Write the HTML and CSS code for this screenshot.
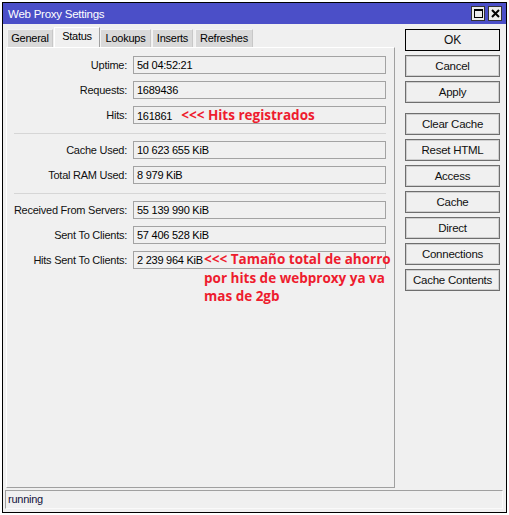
FILE: index.html
```html
<!DOCTYPE html>
<html>
<head>
<meta charset="utf-8">
<link rel="stylesheet" href="styles.css">
</head>
<body>
<div class="window">
  <div class="titlebar">
    <span class="title">Web Proxy Settings</span>
    <div class="tb-btns">
      <span class="tb-btn"><svg width="11" height="11" viewBox="0 0 11 11"><rect x="1.5" y="1.5" width="8" height="8" fill="none" stroke="#000" stroke-width="1"/><rect x="1" y="1" width="9" height="2" fill="#000"/></svg></span>
      <span class="tb-btn"><svg width="11" height="11" viewBox="0 0 11 11"><path d="M2 2 L9 9 M9 2 L2 9" stroke="#000" stroke-width="2"/></svg></span>
    </div>
  </div>
  <div class="main">
    <div class="left">
      <div class="tabs">
        <div class="tab t-general">General</div>
        <div class="tab active t-status">Status</div>
        <div class="tab t-lookups">Lookups</div>
        <div class="tab t-inserts">Inserts</div>
        <div class="tab t-refreshes">Refreshes</div>
      </div>
      <div class="panel">
        <div class="row"><span class="label">Uptime:</span><div class="field">5d 04:52:21</div></div>
        <div class="row"><span class="label">Requests:</span><div class="field">1689436</div></div>
        <div class="row"><span class="label">Hits:</span><div class="field">161861<span class="note">&lt;&lt;&lt; Hits registrados</span></div></div>
        <div class="sep"></div>
        <div class="row"><span class="label">Cache Used:</span><div class="field">10 623 655 KiB</div></div>
        <div class="row"><span class="label">Total RAM Used:</span><div class="field">8 979 KiB</div></div>
        <div class="sep"></div>
        <div class="row"><span class="label">Received From Servers:</span><div class="field">55 139 990 KiB</div></div>
        <div class="row"><span class="label">Sent To Clients:</span><div class="field">57 406 528 KiB</div></div>
        <div class="row"><span class="label">Hits Sent To Clients:</span><div class="field">2 239 964 KiB<div class="note-block">&lt;&lt;&lt; Tamaño total de ahorro<br>por hits de webproxy ya va<br>mas de 2gb</div></div></div>
      </div>
    </div>
    <div class="buttons">
      <div class="btn default">OK</div>
      <div class="btn">Cancel</div>
      <div class="btn">Apply</div>
      <div class="btn group">Clear Cache</div>
      <div class="btn">Reset HTML</div>
      <div class="btn">Access</div>
      <div class="btn">Cache</div>
      <div class="btn">Direct</div>
      <div class="btn">Connections</div>
      <div class="btn">Cache Contents</div>
    </div>
  </div>
  <div class="statusbar">running</div>
</div>
</body>
</html>
```
FILE: styles.css
```css
html, body {
  margin: 0;
  padding: 0;
}
body {
  width: 509px;
  height: 515px;
  overflow: hidden;
  background: #ffffff;
  font-family: "Liberation Sans", Arial, sans-serif;
  font-size: 11px;
  letter-spacing: -0.25px;
  color: #000;
}
.window {
  box-sizing: border-box;
  margin: 2px 0 0 2px;
  width: 505px;
  height: 511px;
  border: 1px solid #000;
  background: #f0f0f0;
  display: flex;
  flex-direction: column;
}
.titlebar {
  height: 21px;
  flex: none;
  background: #4b4fc8;
  display: flex;
  align-items: center;
  padding: 0 4px 0 5px;
  color: #fff;
}
.title {
  font-size: 11.5px;
  flex: 1;
  padding-top: 1px;
}
.tb-btns {
  display: flex;
  gap: 3px;
}
.tb-btn {
  box-sizing: border-box;
  width: 14px;
  height: 15px;
  background: #ececec;
  border: 1px solid #333;
  display: flex;
  align-items: center;
  justify-content: center;
}
.tb-btn svg {
  display: block;
}
.main {
  display: flex;
  height: 464px;
  flex: none;
}
.left {
  width: 392px;
  flex: none;
}
.tabs {
  height: 23px;
  display: flex;
  align-items: flex-end;
  padding-left: 4px;
  box-sizing: border-box;
}
.tab {
  box-sizing: border-box;
  height: 18px;
  margin-right: 1px;
  background: #d9d9d9;
  border: 1px solid #f4f4f4;
  border-bottom: none;
  border-right-color: #c8c8c8;
  line-height: 17px;
  text-align: center;
}
.tab.active {
  height: 21px;
  background: #f0f0f0;
  border-color: #ffffff;
  border-right-color: #a0a0a0;
  line-height: 16px;
  position: relative;
  top: 1px;
}
.t-general { width: 46px; margin-right: 1px; }
.t-status { width: 46px; margin-right: 0; }
.t-lookups { width: 51px; margin-right: 1px; }
.t-inserts { width: 41px; margin-right: 2px; }
.t-refreshes { width: 58px; }
.panel {
  position: relative;
  margin-left: 3px;
  width: 389px;
  height: 441px;
  box-sizing: border-box;
  border: 1px solid #a0a0a0;
  border-top-color: #ffffff;
  border-left-color: #ffffff;
  padding-top: 8px;
  display: flex;
  flex-direction: column;
}
.row {
  display: flex;
  align-items: center;
  height: 18px;
  flex: none;
  margin-bottom: 7px;
}
.label {
  width: 120px;
  text-align: right;
  margin-right: 6px;
  white-space: nowrap;
  color: #111;
}
.field {
  position: relative;
  box-sizing: border-box;
  width: 253px;
  height: 18px;
  border: 1px solid #a3a3a3;
  padding-left: 3px;
  line-height: 16px;
  white-space: nowrap;
}
.note {
  color: #ee1c2e;
  font-family: "Open Sans", sans-serif;
  font-weight: bold;
  font-size: 13.5px;
  letter-spacing: 0;
  margin-left: 9px;
}
.note-block {
  position: absolute;
  left: 70px;
  top: -2px;
  color: #ee1c2e;
  font-family: "Open Sans", sans-serif;
  font-weight: bold;
  font-size: 13.5px;
  letter-spacing: 0;
  line-height: 18.5px;
}
.sep {
  flex: none;
  margin: 2px 0 7px 7px;
  width: 372px;
  height: 1px;
  background: #d6d6d6;
}
.buttons {
  margin-left: 10px;
  padding-top: 5px;
  width: 95px;
  display: flex;
  flex-direction: column;
}
.btn {
  box-sizing: border-box;
  height: 22px;
  margin-bottom: 4px;
  border: 1px solid #6e6e6e;
  box-shadow: inset 0 0 0 1px #cfcfcf;
  background: #f0f0f0;
  text-align: center;
  line-height: 20px;
  font-size: 11.5px;
  color: #111;
}
.btn.default {
  border-color: #000;
  box-shadow: none;
  font-size: 12px;
}
.btn.group {
  margin-top: 6px;
}
.statusbar {
  box-sizing: border-box;
  margin: 2px 0 0 2px;
  width: 498px;
  height: 19px;
  border: 1px solid #a0a0a0;
  border-right-color: #fafafa;
  border-bottom-color: #fafafa;
  padding-left: 2px;
  line-height: 17px;
  color: #12123c;
}
```
